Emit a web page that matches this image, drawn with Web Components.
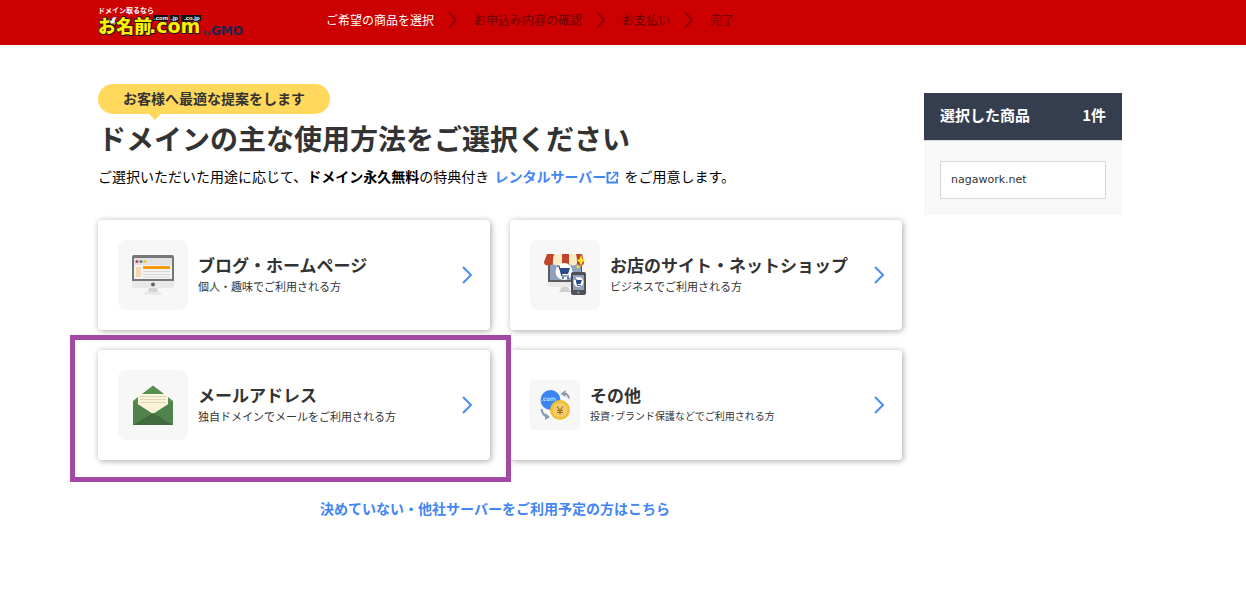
<!DOCTYPE html>
<html lang="ja">
<head>
<meta charset="utf-8">
<meta name="viewport" content="width=device-width, initial-scale=1">
<title>お名前.com</title>
<style>
  body {
    margin: 0;
    background: #fff;
    color: #333;
    font-family: "Noto Sans CJK JP", "Noto Sans", sans-serif;
    font-size: 14px;
    line-height: 20px;
    --link: #4285f4;
  }
</style>
</head>
<body>
<order-page></order-page>

<template id="site-logo">
  <style>
    :host { display: block; }
    a { display: block; width: 148px; height: 32px; }
    svg { display: block; overflow: visible; }
    text { font-family: "Noto Sans CJK JP", sans-serif; font-weight: 900; }
    .tagline { fill: #fff; font-size: 7px; font-weight: 700; }
    .main { fill: #fff000; stroke: #1a1a1a; stroke-width: 2px; paint-order: stroke; stroke-linejoin: round; font-size: 18px; }
    .com { font-family: "DejaVu Sans", sans-serif; font-size: 19px; font-weight: 700; }
    .tld { fill: #fff; font-family: "Liberation Sans", sans-serif; font-size: 6px; font-weight: 700; }
    .by { fill: #1d2f66; font-family: "Liberation Sans", sans-serif; font-size: 7px; font-weight: 400; }
    .gmo { fill: #1d2452; font-family: "DejaVu Sans", sans-serif; font-size: 12px; font-weight: 700; }
  </style>
  <a href="#" aria-label="お名前.com">
    <svg width="148" height="32" viewBox="0 0 148 32">
      <text class="tagline" x="0" y="6">ドメイン取るなら</text>
      <text class="main" x="0" y="26">お名前</text>
      <text class="main com" x="51" y="26">.com</text>
      <path fill="#111" d="M55 8h15v6H55zM72 8h9v6h-9zM83 8h20v6H83z"/>
      <text class="tld" x="56" y="13">.com</text>
      <text class="tld" x="73" y="13">.jp</text>
      <text class="tld" x="86" y="13">.co.jp</text>
      <path fill="#fff" stroke="#333" stroke-width=".5" d="m10 11 3 3 2-4h4l-2 3v3l-4 1z"/>
      <text class="by" x="105" y="28">by</text>
      <text class="gmo" x="113" y="28">GMO</text>
    </svg>
  </a>
</template>

<template id="step-list">
  <style>
    :host { display: block; font-size: 12px; line-height: 20px; }
    ol { display: flex; align-items: center; margin: 0; padding: 0; list-style: none; color: #6b0000; }
    li { display: flex; align-items: center; white-space: nowrap; }
    li[aria-current] { color: #fff; }
    svg { display: block; margin: 0 17px 0 14px; }
  </style>
  <ol></ol>
</template>

<template id="site-header">
  <style>
    :host { display: block; background: #c00; }
    header { display: flex; align-items: flex-start; max-width: 1050px; height: 45px; margin: 0 auto; }
    site-logo { margin: 7px 80px 0 0; }
    step-list { margin-top: 10px; }
  </style>
  <header>
    <site-logo></site-logo>
    <step-list steps="ご希望の商品を選択,お申込み内容の確認,お支払い,完了"></step-list>
  </header>
</template>

<template id="speech-badge">
  <style>
    :host { display: block; }
    span {
      position: relative; display: inline-block; padding: 0 25px 2px; border-radius: 15px;
      background: #ffd85c; font-weight: 700; font-size: 14px; line-height: 28px; vertical-align: top;
    }
    span::after {
      content: ""; position: absolute; left: 51px; top: 100%;
      border: 6px solid transparent; border-top-color: #ffd85c; border-bottom: 0;
    }
  </style>
  <span><slot></slot></span>
</template>

<template id="usage-card">
  <style>
    :host { display: block; position: relative; }
    a {
      display: flex; align-items: center; box-sizing: border-box; height: 110px; padding: 20px 17px 20px 20px;
      border-radius: 4px; background: #fff; box-shadow: 1px 1px 6px rgba(0,0,0,.35);
      color: #333; text-decoration: none;
    }
    .icon { flex: none; width: 70px; height: 70px; border-radius: 8px; background: #f7f7f7; }
    :host([small]) .icon { width: 50px; height: 50px; border-radius: 4px; }
    .icon ::slotted(svg) { display: block; width: 100%; height: 100%; }
    .text { flex: 1; margin-left: 10px; padding-bottom: 2px; white-space: nowrap; }
    h2 { margin: 0; font-size: 17px; line-height: 24px; font-weight: 700; }
    p { margin: 0; font-size: 11px; line-height: 18px; }
    :host([small]) p { font-size: 10px; }
    .frame { display: none; }
    :host([marked]) { z-index: 1; }
    :host([marked]) .frame {
      display: block; position: absolute; inset: -15px -21px -22px -28px;
      border: 5px solid #a349a4; pointer-events: none;
    }
  </style>
  <a href="#">
    <span class="icon"><slot name="icon"></slot></span>
    <div class="text">
      <h2><slot name="title"></slot></h2>
      <p><slot></slot></p>
    </div>
    <svg width="12" height="18" viewBox="0 0 12 18" fill="none" stroke="#4a8df6" stroke-width="2" aria-hidden="true"><path d="m2 1 8 8-8 8"/></svg>
  </a>
  <div class="frame"></div>
</template>

<template id="cart-panel">
  <style>
    :host { display: block; background: #f8f8f8; }
    h2 {
      display: flex; justify-content: space-between; margin: 0; padding: 10px 16px 13px;
      background: #353e4e; color: #fff; font-size: 15px; line-height: 24px; font-weight: 700;
    }
    .body { border-top: 1px solid #d8d8d8; padding: 20px 16px 16px; }
    .item {
      border: 1px solid #d5d5d5; padding: 8px 10px; background: #fff;
      font-family: "DejaVu Sans", sans-serif; font-size: 11px; line-height: 20px;
    }
  </style>
  <h2><span>選択した商品</span><span>1件</span></h2>
  <div class="body"><div class="item"><slot></slot></div></div>
</template>

<template id="order-page">
  <style>
    :host { display: block; }
    .wrap {
      display: grid; grid-template-columns: minmax(0, 1fr) 198px; column-gap: 22px; align-items: start;
      max-width: 1050px; box-sizing: border-box; margin: 0 auto; padding: 39px 26px 80px 0;
    }
    h1 { margin: 4px 0 0; font-size: 28px; line-height: 40px; font-weight: 700; }
    .lead { margin: 8px 0 0; color: #000; line-height: 20px; }
    a { color: var(--link); font-weight: 700; text-decoration: none; }
    .lead a { margin: 0 2px; }
    .ext { display: inline-block; vertical-align: -2px; }
    .cards { display: grid; grid-template-columns: 1fr 1fr; gap: 20px; margin-top: 34px; }
    .other { margin: 38px 10px 0 0; text-align: center; }
    cart-panel { margin-top: 9px; }
  </style>
  <site-header></site-header>
  <div class="wrap">
    <main>
      <speech-badge>お客様へ最適な提案をします</speech-badge>
      <h1>ドメインの主な使用方法をご選択ください</h1>
      <p class="lead">ご選択いただいた用途に応じて、<b>ドメイン永久無料</b>の特典付き <a href="#">レンタルサーバー<svg class="ext" width="13" height="13" viewBox="0 0 13 13" fill="none" stroke="#4285f4" aria-hidden="true"><path stroke-width="2" d="M5 2H1.500v9.500H11V8"/><path stroke-width="1.500" d="M4.500 8.500 11 2M7 1.500h4.500V6"/></svg></a> をご用意します。</p>
      <div class="cards">
        <usage-card>
          <svg slot="icon" viewBox="0 0 70 70" aria-hidden="true">
            <path fill="#e9e9e9" d="M14 40h42v6q0 2-2 2H16q-2 0-2-2z"/>
            <path fill="#777" d="M16 15h38q2 0 2 2v24H14V17q0-2 2-2z"/>
            <path fill="#f3f3f3" d="M16 18h38v21H16z"/><path fill="#e2e2e4" d="M16 18h38v7H16z"/>
            <circle cx="19" cy="21.500" r="1.500" fill="#b8405e"/><circle cx="23" cy="21.500" r="1.500" fill="#5a8a60"/><circle cx="27" cy="21.500" r="1.500" fill="#f4c22e"/>
            <path fill="#f3d5ae" d="M18 27h5v10h-5z"/><path fill="#f79a0e" d="M25 26h27v3H25z"/>
            <path stroke="#d9d9d9" d="M25 31.500h27M25 34.500h27M25 37h27"/>
            <circle cx="35" cy="44.500" r="2" fill="#666"/>
            <path fill="#d4d4d4" d="M31 48h8l1 4H30z"/><path fill="#e8e8e8" d="M27 52h16l1 2.500H26z"/>
          </svg>
          <span slot="title">ブログ・ホームページ</span>個人・趣味でご利用される方
        </usage-card>
        <usage-card>
          <svg slot="icon" viewBox="0 0 70 70" aria-hidden="true">
            <path fill="#5c5c5e" d="M18 20h34v22H18z"/><path fill="#8fa0bd" d="M20 22h31v18H20z"/>
            <path fill="#e9e9ea" d="M18 42h34v5H18z"/><path fill="#cfcfd0" d="m32 47-3 5h12l-3-5z"/>
            <path fill="#c1452c" d="M17 14h7l-1 8q0 3.500-4.500 3.500T14 22zM32 14h7v8q0 3.500-3.500 3.500T32 22zM46 14h6l2 8q0 3.500-3.500 3.500T47 22z"/>
            <path fill="#f9ecc6" d="M24 14h8v8q0 3.500-4.500 3.500T23 22zM39 14h7l1 8q0 3.500-4 3.500T39 22z"/>
            <circle cx="34" cy="31.500" r="8.500" fill="#fff"/>
            <path fill="#2b4c8c" d="M30 28h10l-2 6h-7z"/><path fill="none" stroke="#2b4c8c" stroke-width="1.200" d="M27 26h2l3 10h7"/>
            <circle cx="33" cy="38" r="1" fill="#2b4c8c"/><circle cx="38" cy="38" r="1" fill="#2b4c8c"/>
            <path fill="#f8e52a" d="m51 15 1.500 4 3 1.500-3 1.500-1.500 4-1.500-4-3-1.500 3-1.500zM48 24l.7 2 1.800.7-1.800.8-.7 2-.8-2-1.700-.8 1.700-.7z"/>
            <rect x="41" y="32" width="15" height="23" rx="2" fill="#4e5157"/><path fill="#8fa0bd" d="M43 35h11v15H43z"/>
            <circle cx="48.500" cy="42" r="5" fill="#fff"/><path fill="#2b4c8c" d="M46 40h6l-1.500 4H47z"/><path stroke="#2b4c8c" d="M44.500 39H46l1.500 6.500H51" fill="none"/>
            <circle cx="48.500" cy="52.500" r="1.200" fill="#8b8e94"/>
          </svg>
          <span slot="title">お店のサイト・ネットショップ</span>ビジネスでご利用される方
        </usage-card>
        <usage-card marked>
          <svg slot="icon" viewBox="0 0 70 70" aria-hidden="true">
            <path fill="#55904f" d="M35 15.500 50 27 55 31v24H15V31l5-4z"/>
            <path fill="#f9f3da" d="M20 24h30v11L35 44 20 35z"/><path fill="#fffbe9" d="M20 24h30v1H20z"/>
            <path stroke="#ddd6b8" d="M22 26.500h26M22 29.500h26M22 32.500h26"/>
            <path fill="#50834b" d="m15 31 20 13 20-13v24H15z"/>
            <path fill="#42693f" d="m15 55 20-12 20 12z"/>
          </svg>
          <span slot="title">メールアドレス</span>独自ドメインでメールをご利用される方
        </usage-card>
        <usage-card small>
          <svg slot="icon" viewBox="0 0 50 50" aria-hidden="true">
            <circle cx="20.500" cy="20" r="10" fill="#3b85f2"/>
            <text x="11" y="21" font-size="6" fill="#fff" style="font-family:'DejaVu Sans',sans-serif">.com</text>
            <circle cx="30" cy="30" r="10" fill="#efbf2d"/><circle cx="30" cy="30" r="7.500" fill="#f4cb6d"/>
            <path fill="none" stroke="#9a7020" stroke-width="1.200" d="m27 26.500 3 4 3-4M30 30v4.500M27 30.500h6M27 32.500h6"/>
            <path fill="none" stroke="#8a9bb0" stroke-width="2" d="M34 13.500q4 0 5 5M11.500 29q1 6 5 7.500"/>
            <path fill="#8a9bb0" d="m35.500 10-5 4 5 3zM15 33l5 4-5 3z"/>
          </svg>
          <span slot="title">その他</span>投資･ブランド保護などでご利用される方
        </usage-card>
      </div>
      <p class="other"><a href="#">決めていない・他社サーバーをご利用予定の方はこちら</a></p>
    </main>
    <aside><cart-panel>nagawork.net</cart-panel></aside>
  </div>
</template>

<script>
  class TemplateElement extends HTMLElement {
    constructor() {
      super();
      const template = document.getElementById(this.localName);
      this.attachShadow({ mode: "open" }).append(template.content.cloneNode(true));
    }
  }

  class StepList extends TemplateElement {
    connectedCallback() {
      const arrow = '<svg width="9" height="18" viewBox="0 0 9 18" fill="none" stroke="#7d0000" stroke-width="1.500" aria-hidden="true"><path d="m1 1 7 8-7 8"/></svg>';
      this.shadowRoot.querySelector("ol").innerHTML = this.getAttribute("steps").split(",")
        .map((step, i) => i === 0 ? `<li aria-current="step">${step}</li>` : `<li>${arrow}${step}</li>`)
        .join("");
    }
  }

  customElements.define("step-list", StepList);
  for (const name of ["site-logo", "site-header", "speech-badge", "usage-card", "cart-panel", "order-page"]) {
    customElements.define(name, class extends TemplateElement {});
  }
</script>
</body>
</html>
